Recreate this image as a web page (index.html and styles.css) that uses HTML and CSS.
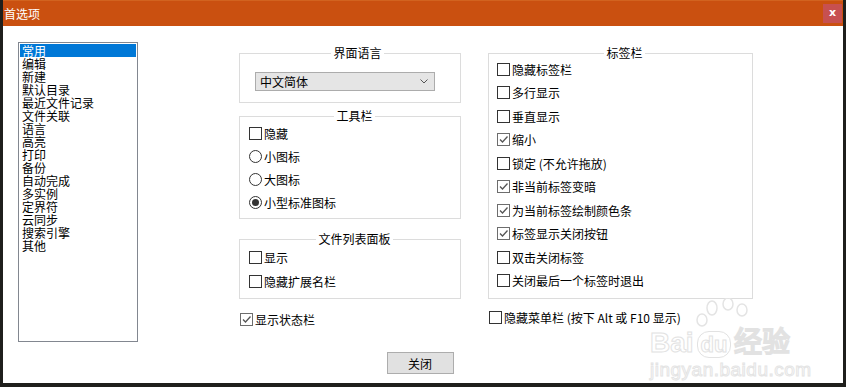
FILE: index.html
```html
<!DOCTYPE html>
<html lang="zh-CN">
<head>
    <meta charset="UTF-8">
    <title>首选项</title>
    <link rel="stylesheet" href="styles.css">
</head>
<body>
    <div class="window">
        <div class="titlebar">
            <span class="title">首选项</span>
            <span class="close-x">x</span>
        </div>
        <div class="content">
            <div class="main">
                <ul class="list">
                    <li class="selected">常用</li>
                    <li>编辑</li>
                    <li>新建</li>
                    <li>默认目录</li>
                    <li>最近文件记录</li>
                    <li>文件关联</li>
                    <li>语言</li>
                    <li>高亮</li>
                    <li>打印</li>
                    <li>备份</li>
                    <li>自动完成</li>
                    <li>多实例</li>
                    <li>定界符</li>
                    <li>云同步</li>
                    <li>搜索引擎</li>
                    <li>其他</li>
                </ul>

                <div class="col mid">
                    <fieldset class="group lang">
                        <legend>界面语言</legend>
                        <div class="select">
                            <span>中文简体</span>
                            <svg width="8" height="5" viewBox="0 0 8 5"><path d="M0.5 0.5 L4 4 L7.5 0.5" fill="none" stroke="#555" stroke-width="1"/></svg>
                        </div>
                    </fieldset>

                    <fieldset class="group tools">
                        <legend>工具栏</legend>
                        <div class="opt"><span class="box"></span>隐藏</div>
                        <div class="opt"><span class="radio"></span>小图标</div>
                        <div class="opt"><span class="radio"></span>大图标</div>
                        <div class="opt"><span class="radio on"></span>小型标准图标</div>
                    </fieldset>

                    <fieldset class="group files">
                        <legend>文件列表面板</legend>
                        <div class="opt"><span class="box"></span>显示</div>
                        <div class="opt"><span class="box"></span>隐藏扩展名栏</div>
                    </fieldset>

                    <div class="opt single"><span class="box on"><svg width="11" height="11" viewBox="0 0 11 11"><path d="M2 5.5 L4.5 8 L9.5 2.5" fill="none" stroke="#555" stroke-width="1.3"/></svg></span>显示状态栏</div>
                </div>

                <div class="col right">
                    <fieldset class="group tabs">
                        <legend>标签栏</legend>
                        <div class="opt"><span class="box"></span>隐藏标签栏</div>
                        <div class="opt"><span class="box"></span>多行显示</div>
                        <div class="opt"><span class="box"></span>垂直显示</div>
                        <div class="opt"><span class="box on"><svg width="11" height="11" viewBox="0 0 11 11"><path d="M2 5.5 L4.5 8 L9.5 2.5" fill="none" stroke="#555" stroke-width="1.3"/></svg></span>缩小</div>
                        <div class="opt"><span class="box"></span>锁定 (不允许拖放)</div>
                        <div class="opt"><span class="box on"><svg width="11" height="11" viewBox="0 0 11 11"><path d="M2 5.5 L4.5 8 L9.5 2.5" fill="none" stroke="#555" stroke-width="1.3"/></svg></span>非当前标签变暗</div>
                        <div class="opt"><span class="box on"><svg width="11" height="11" viewBox="0 0 11 11"><path d="M2 5.5 L4.5 8 L9.5 2.5" fill="none" stroke="#555" stroke-width="1.3"/></svg></span>为当前标签绘制颜色条</div>
                        <div class="opt"><span class="box on"><svg width="11" height="11" viewBox="0 0 11 11"><path d="M2 5.5 L4.5 8 L9.5 2.5" fill="none" stroke="#555" stroke-width="1.3"/></svg></span>标签显示关闭按钮</div>
                        <div class="opt"><span class="box"></span>双击关闭标签</div>
                        <div class="opt"><span class="box"></span>关闭最后一个标签时退出</div>
                    </fieldset>

                    <div class="opt single menu"><span class="box"></span>隐藏菜单栏 (按下 Alt 或 F10 显示)</div>
                </div>
            </div>

            <div class="footer">
                <button class="btn">关闭</button>
            </div>

            <!-- faint watermark in the corner -->
            <div class="watermark">
                <svg class="paw" width="70" height="40" viewBox="0 0 70 40">
                    <g fill="none" stroke="#e4e4e4" stroke-width="1.5">
                        <ellipse cx="22" cy="10" rx="5" ry="7"/>
                        <ellipse cx="38" cy="6" rx="5" ry="6"/>
                        <ellipse cx="52" cy="12" rx="5" ry="6"/>
                        <ellipse cx="12" cy="22" rx="5" ry="6"/>
                    </g>
                </svg>
                <div class="wm-logo">Bai<span class="du">du</span>经验</div>
                <div class="wm-url">jingyan.baidu.com</div>
            </div>
        </div>
    </div>
</body>
</html>
```

FILE: styles.css
```css
body {
    margin: 0;
    background: #1f1f1c;
    font-family: "Noto Sans CJK SC", "Noto Sans", sans-serif;
    font-size: 12px;
    color: #000;
}
.window {
    margin-left: 3px;
    width: 840px;
    height: 383px;
    background: #fff;
    display: flex;
    flex-direction: column;
}
.titlebar {
    height: 25px;
    background: #ca5010;
    border-top: 1px solid #d2631f;
    display: flex;
    align-items: center;
    justify-content: space-between;
    color: #fff;
}
.title {
    padding-left: 1px;
    font-size: 12px;
    line-height: 14px;
}
.close-x {
    width: 19px;
    height: 19px;
    margin-right: 1px;
    background: #c75050;
    color: #fff;
    font-family: "DejaVu Sans", sans-serif;
    font-weight: bold;
    font-size: 11px;
    line-height: 17px;
    text-align: center;
}
.content {
    flex: 1;
    position: relative;
}
.main {
    display: flex;
    align-items: flex-start;
    padding: 16px 0 0 15px;
    height: 300px;
}
.list {
    list-style: none;
    margin: 0;
    padding: 1px;
    width: 120px;
    height: 300px;
    box-sizing: border-box;
    border: 1px solid #828790;
}
.list li {
    height: 13px;
    line-height: 13px;
    padding-left: 2px;
}
.list li.selected {
    background: #0078d7;
    color: #fff;
}
.col {
    display: flex;
    flex-direction: column;
    padding-top: 4px;
}
.mid {
    margin-left: 101px;
    width: 222px;
}
.right {
    margin-left: 27px;
    width: 265px;
}
.group {
    margin: 0;
    border: 1px solid #dcdcdc;
    min-width: 0;
}
.group legend {
    margin: 0 auto;
    padding: 0 2px;
    line-height: 14px;
}
.lang {
    padding: 12px 0 11px 15px;
}
.tools {
    margin-top: 6px;
    padding: 0 0 6px 9px;
    display: flex;
    flex-direction: column;
    gap: 3px;
}
.files {
    margin-top: 13px;
    padding: 1px 0 7px 9px;
    display: flex;
    flex-direction: column;
    gap: 4px;
}
.tabs {
    padding: 0 0 7px 8px;
    display: flex;
    flex-direction: column;
    gap: 3.5px;
}
.tabs .opt:first-of-type {
    margin-top: -1px;
}
.select {
    width: 180px;
    height: 19px;
    box-sizing: border-box;
    background: #e5e5e5;
    border: 1px solid #acacac;
    display: flex;
    align-items: center;
    justify-content: space-between;
    padding: 0 6px 0 4px;
}
.opt {
    display: flex;
    align-items: center;
    height: 20px;
    gap: 2px;
    white-space: nowrap;
}
.opt.single {
    padding-left: 1px;
    margin-top: 10px;
}
.opt.menu {
    margin-top: 9px;
}
.box {
    width: 13px;
    height: 13px;
    box-sizing: border-box;
    border: 1px solid #333;
    background: #fff;
    display: flex;
    align-items: center;
    justify-content: center;
}
.box.on {
    border-color: #6d6d6d;
}
.radio {
    width: 13px;
    height: 13px;
    box-sizing: border-box;
    border: 1px solid #333;
    border-radius: 50%;
    background: #fff;
    display: flex;
    align-items: center;
    justify-content: center;
}
.radio.on::after {
    content: "";
    width: 7px;
    height: 7px;
    border-radius: 50%;
    background: #333;
}
.footer {
    display: flex;
    justify-content: center;
    padding-right: 6px;
    margin-top: 10px;
}
.btn {
    width: 67px;
    height: 22px;
    background: #e1e1e1;
    border: 1px solid #adadad;
    font-family: "Noto Sans CJK SC", sans-serif;
    font-size: 12px;
    color: #000;
    padding: 0;
}
.watermark {
    position: absolute;
    left: 647px;
    top: 272px;
    color: #fff;
    pointer-events: none;
}
.paw {
    display: block;
    margin-left: 40px;
}
.wm-logo {
    font-family: "Liberation Sans", sans-serif;
    font-size: 28px;
    font-weight: bold;
    line-height: 26px;
    margin-top: -8px;
    -webkit-text-stroke: 1px #e2e2e2;
}
.wm-logo .du {
    border: 1.5px solid #e2e2e2;
    border-radius: 12px;
    padding: 0 3px;
    margin: 0 3px;
    font-size: 22px;
}
.wm-url {
    font-family: "Liberation Sans", sans-serif;
    font-size: 19px;
    line-height: 24px;
    letter-spacing: 0.5px;
    -webkit-text-stroke: 1px #e4e4e4;
}
```
